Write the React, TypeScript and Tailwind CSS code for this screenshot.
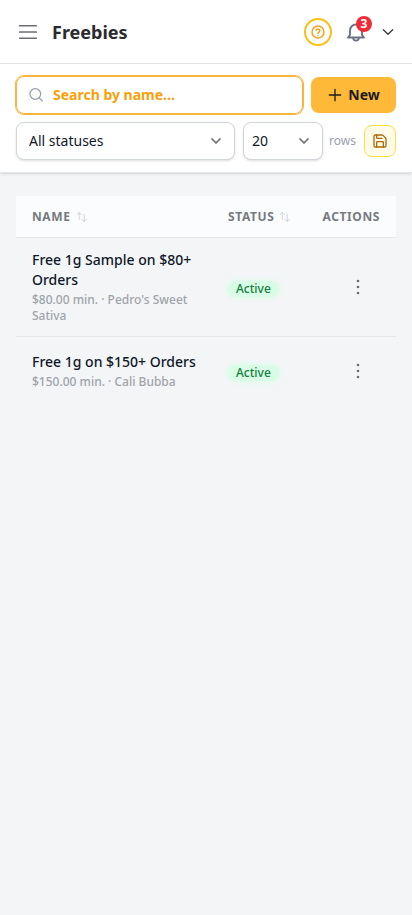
import type { ReactNode } from 'react';
import clsx from 'clsx';

const FREEBIES = [
  { id: 1, name: 'Free 1g Sample on $80+ Orders', detail: "$80.00 min. · Pedro's Sweet Sativa", status: 'Active' },
  { id: 2, name: 'Free 1g on $150+ Orders', detail: '$150.00 min. · Cali Bubba', status: 'Active' },
];

type IconProps = { className?: string; strokeWidth?: number; children: ReactNode };

function Icon({ className, strokeWidth = 1.5, children }: IconProps) {
  return (
    <svg
      viewBox="0 0 24 24"
      fill="none"
      stroke="currentColor"
      strokeWidth={strokeWidth}
      strokeLinecap="round"
      strokeLinejoin="round"
      className={clsx('shrink-0', className)}
    >
      {children}
    </svg>
  );
}

function Header() {
  return (
    <header className="flex h-16 items-center border-b border-gray-200 bg-white px-4">
      <button aria-label="Menu" className="text-[#6b6d73]">
        <Icon className="size-6" strokeWidth={1.7}>
          <path d="M3.75 5.75h16.5M3.75 12h16.5M3.75 18.25h16.5" />
        </Icon>
      </button>
      <h1 className="ml-3 text-lg font-bold text-[#2b2b2f]">Freebies</h1>

      <div className="ml-auto flex items-center">
        <button
          aria-label="Help"
          className="flex size-7 items-center justify-center rounded-full border-2 border-[#fbbf16] text-[#f5a01c]"
        >
          <Icon className="size-4" strokeWidth={2.2}>
            <circle cx="12" cy="12" r="9" />
            <path d="M9.2 9.3a2.9 2.9 0 0 1 5.6.9c0 1.9-2.8 2.1-2.8 3.7M12 16.8h.01" />
          </Icon>
        </button>

        <button aria-label="Notifications" className="relative ml-3 text-gray-500">
          <Icon className="size-6" strokeWidth={1.9}>
            <path d="M4 17.5h16L18 15v-4.5a6 6 0 0 0-12 0V15Z" />
            <path d="M9.2 17.8a2.8 2.8 0 0 0 5.6 0" />
          </Icon>
          <span className="absolute -top-1 left-3 flex size-4 items-center justify-center rounded-full bg-[#ef2b35] text-xs font-bold leading-none text-white">
            3
          </span>
        </button>

        <button aria-label="Account" className="ml-3 text-[#3c3c42]">
          <Icon className="size-4" strokeWidth={2}>
            <path d="m5 8.5 7 7 7-7" />
          </Icon>
        </button>
      </div>
    </header>
  );
}

function Select({ value, className }: { value: string; className?: string }) {
  return (
    <button
      className={clsx(
        'flex h-[38px] items-center justify-between rounded-lg border border-gray-300 bg-white text-sm text-gray-900 shadow-sm',
        className,
      )}
    >
      {value}
      <Icon className="size-3 text-[#6b6d73]" strokeWidth={3.5}>
        <path d="m4 8 8 8 8-8" />
      </Icon>
    </button>
  );
}

function Toolbar() {
  return (
    <div className="relative flex flex-col gap-2 border-b border-gray-200 bg-white px-4 py-3 shadow-sm">
      <div className="flex items-center gap-2">
        <label className="flex h-[38px] flex-1 items-center rounded-lg border border-[#f9b540] pl-3 ring-1 ring-[#f9b540]">
          <Icon className="size-4 text-gray-400" strokeWidth={2}>
            <circle cx="9.5" cy="10.5" r="8" />
            <path d="m15.3 16.3 4.7 4.7" />
          </Icon>
          <input
            placeholder="Search by name..."
            className="ml-2 w-full min-w-0 bg-transparent text-sm font-bold outline-none placeholder:text-[#f99f0b] placeholder:opacity-100"
          />
        </label>
        <button className="flex h-9 w-[85px] items-center justify-center gap-[5px] rounded-lg bg-[#ffb938] text-sm font-bold text-[#1c1c1c]">
          <Icon className="size-4" strokeWidth={2}>
            <path d="M12 3.5v17M3.5 12h17" />
          </Icon>
          New
        </button>
      </div>

      <div className="flex items-center">
        <Select value="All statuses" className="flex-1 px-3" />
        <Select value="20" className="ml-2 w-20 pl-2 pr-3" />
        <span className="ml-1.5 text-xs text-gray-400">rows</span>
        <button
          aria-label="Save"
          className="ml-2 flex size-8 items-center justify-center rounded-lg border border-[#fde047] bg-[#fefce8] text-[#ad6a0a]"
        >
          <Icon className="size-4" strokeWidth={2}>
            <path d="M15.2 3a2 2 0 0 1 1.4.6l3.8 3.8a2 2 0 0 1 .6 1.4V19a2 2 0 0 1-2 2H5a2 2 0 0 1-2-2V5a2 2 0 0 1 2-2z" />
            <path d="M17 21v-7a1 1 0 0 0-1-1H8a1 1 0 0 0-1 1v7M7 3v4a1 1 0 0 0 1 1h7" />
          </Icon>
        </button>
      </div>
    </div>
  );
}

function SortIcon() {
  return (
    <Icon className="size-3 text-gray-300" strokeWidth={2}>
      <path d="M6.5 17V3M2 7.5 6.5 3 11 7.5M16.5 7v14M12 16.5l4.5 4.5 4.5-4.5" />
    </Icon>
  );
}

function FreebiesTable() {
  return (
    <table className="w-full table-fixed">
      <colgroup>
        <col className="w-[196px]" />
        <col className="w-[94px]" />
        <col />
      </colgroup>
      <thead>
        <tr className="h-[41px] border-b border-gray-200 bg-[#fafcfe] text-xs tracking-wider text-[#777a80]">
          <th className="px-4 pt-px text-left font-bold">
            <span className="flex items-center gap-[5px]">NAME <SortIcon /></span>
          </th>
          <th className="pl-4 pt-px text-left font-bold">
            <span className="flex items-center gap-[5px]">STATUS <SortIcon /></span>
          </th>
          <th className="pr-4 pt-px text-right font-bold">ACTIONS</th>
        </tr>
      </thead>
      <tbody>
        {FREEBIES.map((freebie) => (
          <tr key={freebie.id} className="border-b border-gray-200 last:border-b-0">
            <td className="py-3 pl-4 pr-3">
              <div className="text-sm font-medium text-gray-900">{freebie.name}</div>
              <div className="mt-0.5 text-xs font-medium text-[#a0a4a9]">{freebie.detail}</div>
            </td>
            <td className="pl-4">
              <span className="inline-flex h-4 items-center rounded-full bg-[#d8fce5] px-2 text-xs font-medium text-[#15803d] shadow-[0_0_5px_1px_#dcfce7]">
                {freebie.status}
              </span>
            </td>
            <td className="py-3 pl-[30px]">
              <button aria-label="Row actions" className="flex size-11 items-center justify-center text-[#6b6d73]">
                <svg viewBox="0 0 20 20" fill="currentColor" className="size-5">
                  <circle cx="10" cy="4" r="1.3" />
                  <circle cx="10" cy="10" r="1.3" />
                  <circle cx="10" cy="16" r="1.3" />
                </svg>
              </button>
            </td>
          </tr>
        ))}
      </tbody>
    </table>
  );
}

export default function App() {
  return (
    <div className="min-h-screen bg-[#f3f5f7] font-['Noto_Sans',sans-serif]">
      <Header />
      <Toolbar />
      <main className="px-4 pt-[23px]">
        <FreebiesTable />
      </main>
    </div>
  );
}
